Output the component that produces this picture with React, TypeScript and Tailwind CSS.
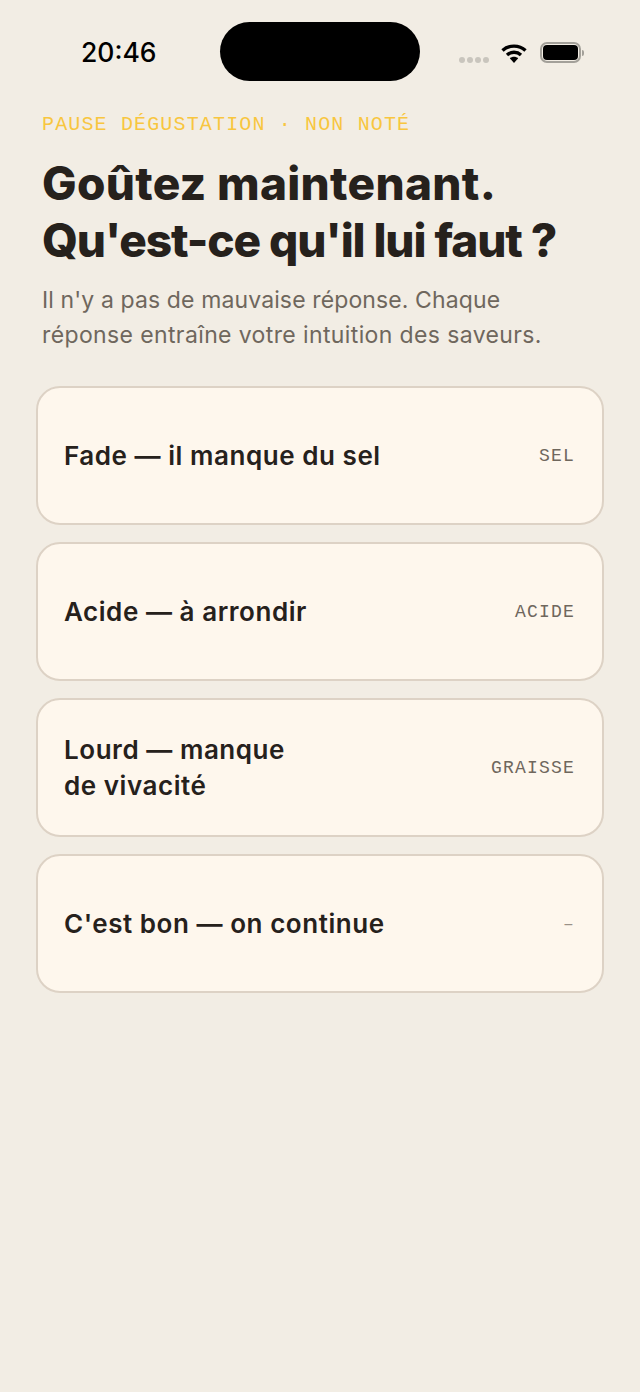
const options = [
  { id: 'sel', label: 'Fade — il manque du sel', tag: 'SEL' },
  { id: 'acide', label: 'Acide — à arrondir', tag: 'ACIDE' },
  { id: 'graisse', label: 'Lourd — manque\nde vivacité', tag: 'GRAISSE' },
  { id: 'none', label: "C'est bon — on continue", tag: '–' },
];

function StatusBar() {
  return (
    <div className="relative flex h-[105px] items-start justify-between pl-[81px] pr-[56px] pt-[35px]">
      <span className="font-['Inter',sans-serif] text-[26.5px] leading-[34px] font-medium text-black">20:46</span>
      {/* dynamic island */}
      <div className="absolute left-[220px] top-[22px] h-[59px] w-[200px] rounded-[30px] bg-black" />
      <div className="flex items-center pt-[7px]">
        <div className="mr-[12px] mt-[14px] flex gap-[2px]">
          <span className="h-[6px] w-[6px] rounded-full bg-[#c9c5bd]" />
          <span className="h-[6px] w-[6px] rounded-full bg-[#c9c5bd]" />
          <span className="h-[6px] w-[6px] rounded-full bg-[#c9c5bd]" />
          <span className="h-[6px] w-[6px] rounded-full bg-[#c9c5bd]" />
        </div>
        <svg width="26" height="20" viewBox="0 0 26 20" className="mr-[13px]">
          <path d="M1.5 7.5C7.8 1.6 18.2 1.6 24.5 7.5" fill="none" stroke="#000" strokeWidth="3.4" />
          <path d="M6 12C10 8.4 16 8.4 20 12" fill="none" stroke="#000" strokeWidth="3.4" />
          <path d="M8.8 15.2C11.2 13.2 14.8 13.2 17.2 15.2L13 20Z" fill="#000" />
        </svg>
        <div className="flex items-center">
          <div className="flex h-[21px] w-[41px] items-center justify-center rounded-[7px] border-2 border-[#a3a099]">
            <div className="h-[15px] w-[35px] rounded-[4px] bg-black" />
          </div>
          <div className="ml-[1px] h-[6px] w-[2px] rounded-r-[2px] bg-[#a3a099]" />
        </div>
      </div>
    </div>
  );
}

export default function App() {
  return (
    <div className="min-h-[1392px] w-[640px] bg-[#f2ede4] font-['Inter',sans-serif]">
      <StatusBar />
      <div className="px-[36px]">
        <div className="px-[6px]">
          <p className="font-['Liberation_Mono',monospace] text-[20px] leading-[40px] tracking-[1.15px] text-[#f8c63f]">
            PAUSE DÉGUSTATION · NON NOTÉ
          </p>
          <h1 className="mt-[10px] text-[46px] leading-[57px] font-extrabold text-[#26211c]">
            <span className="block tracking-[0.3px]">Goûtez maintenant.</span>
            <span className="block tracking-[-1.1px]">Qu'est-ce qu'il lui faut ?</span>
          </h1>
          <p className="mt-[14px] text-[23px] leading-[35px] text-[#6f675d]">
            <span className="block tracking-[0.12px]">Il n'y a pas de mauvaise réponse. Chaque</span>
            <span className="block tracking-[0.38px]">réponse entraîne votre intuition des saveurs.</span>
          </p>
        </div>
        <div className="mt-[33px] flex flex-col gap-[17px]">
          {options.map((o) => (
            <button
              key={o.id}
              className="flex h-[139px] w-full items-center justify-between rounded-[24px] border-2 border-[#ddd2c5] bg-[#fef7ed] pl-[26px] pr-[27px] text-left"
            >
              <span className="whitespace-pre-line text-[26px] leading-[36px] font-semibold tracking-[0.55px] text-[#26211c]">{o.label}</span>
              <span className={`font-['Liberation_Mono',monospace] text-[18px] leading-[24px] tracking-[1.2px] ${o.tag === '–' ? 'text-[#9a9187]' : 'text-[#6f675d]'}`}>
                {o.tag}
              </span>
            </button>
          ))}
        </div>
      </div>
    </div>
  );
}
